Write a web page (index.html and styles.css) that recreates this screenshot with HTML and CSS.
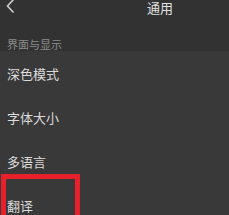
FILE: index.html
```html
<!DOCTYPE html>
<html lang="zh">
<head>
<meta charset="utf-8">
<link rel="stylesheet" href="styles.css">
</head>
<body>
<div class="page">
  <div class="top">
    <div class="header">
      <svg class="back" width="10" height="15" viewBox="0 0 10 15"><path d="M8.5 0.5 L2.5 7 L8.5 13.5" fill="none" stroke="#d0d0d0" stroke-width="1.6"/></svg>
      <div class="title">通用</div>
    </div>
    <div class="section">界面与显示</div>
  </div>
  <div class="list">
    <div class="item">深色模式</div>
    <div class="item">字体大小</div>
    <div class="item">多语言</div>
    <div class="item last">翻译<span class="mark"></span></div>
  </div>
</div>
</body>
</html>
```
FILE: styles.css
```css
html, body { margin: 0; padding: 0; }
body {
  width: 229px; height: 215px; overflow: hidden;
  background: #393939;
  font-family: "Noto Sans CJK SC", "Noto Sans", sans-serif;
}
.page { width: 229px; height: 215px; overflow: hidden; }
.top { background: #323232; height: 51px; }
.header {
  position: relative; height: 16px;
}
.back { position: absolute; left: 5px; top: -1px; }
.title {
  position: absolute; left: 147px; top: 1px;
  font-size: 13px; line-height: 14px; color: #e2e2e2;
}
.section {
  padding: 21px 0 0 7px;
  font-size: 11px; line-height: 14px; color: #8c8c8c;
}
.list { background: #393939; }
.item {
  position: relative;
  height: 44px;
  display: flex; align-items: center;
  padding-left: 7px;
  font-size: 13px; line-height: 18px; color: #dcdcdc;
}
.item:first-child { margin-top: 1px; }
.mark {
  position: absolute; left: 1px; top: -10px;
  width: 79px; height: 70px;
  box-sizing: border-box;
  border: 5px solid #e8202a;
}
```
